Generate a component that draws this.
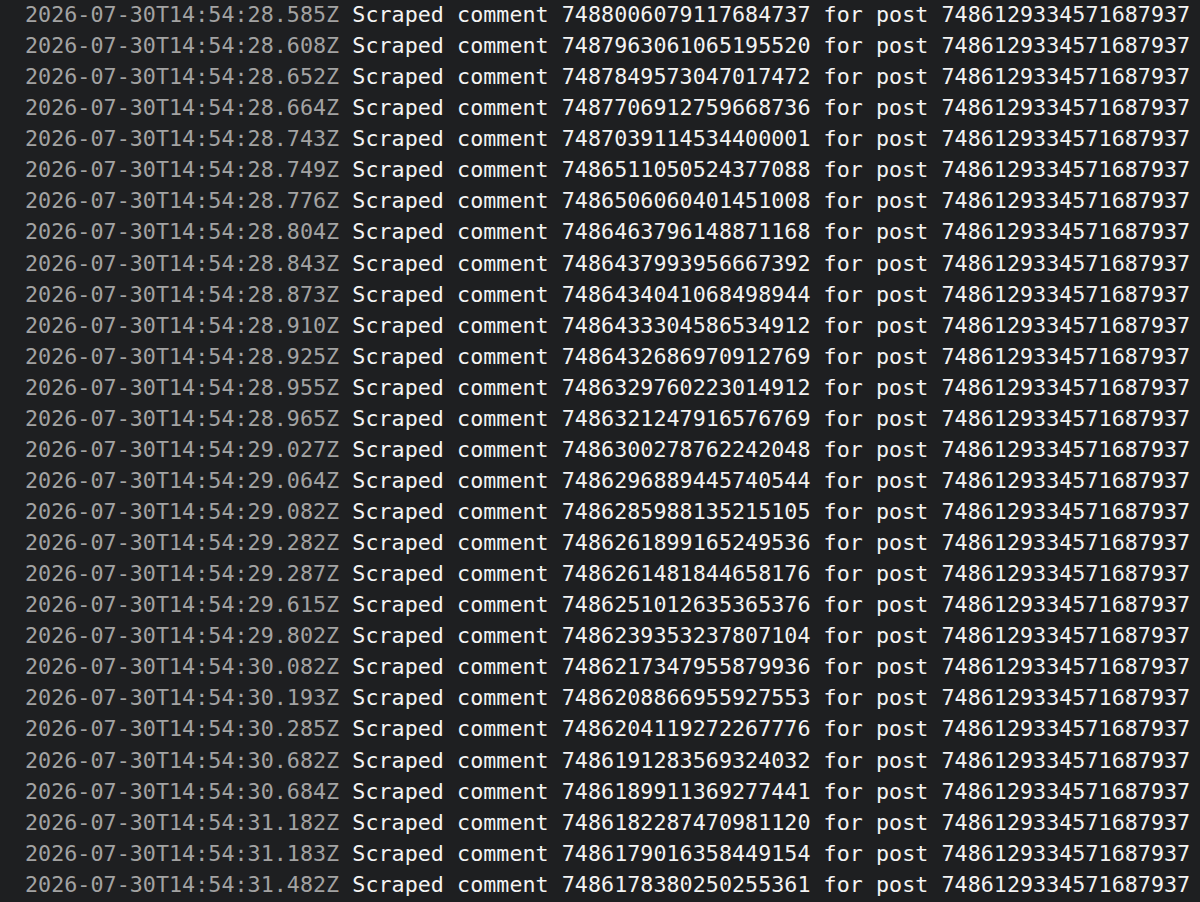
import React from "react";

const POST_ID = "7486129334571687937";

const rows: [string, string][] = [
    ["28.585", "7488006079117684737"],
    ["28.608", "7487963061065195520"],
    ["28.652", "7487849573047017472"],
    ["28.664", "7487706912759668736"],
    ["28.743", "7487039114534400001"],
    ["28.749", "7486511050524377088"],
    ["28.776", "7486506060401451008"],
    ["28.804", "7486463796148871168"],
    ["28.843", "7486437993956667392"],
    ["28.873", "7486434041068498944"],
    ["28.910", "7486433304586534912"],
    ["28.925", "7486432686970912769"],
    ["28.955", "7486329760223014912"],
    ["28.965", "7486321247916576769"],
    ["29.027", "7486300278762242048"],
    ["29.064", "7486296889445740544"],
    ["29.082", "7486285988135215105"],
    ["29.282", "7486261899165249536"],
    ["29.287", "7486261481844658176"],
    ["29.615", "7486251012635365376"],
    ["29.802", "7486239353237807104"],
    ["30.082", "7486217347955879936"],
    ["30.193", "7486208866955927553"],
    ["30.285", "7486204119272267776"],
    ["30.682", "7486191283569324032"],
    ["30.684", "7486189911369277441"],
    ["31.182", "7486182287470981120"],
    ["31.183", "7486179016358449154"],
    ["31.482", "7486178380250255361"],
];

export default function App() {
    return (
        <div className="w-[1200px] h-[902px] overflow-hidden bg-[#1e1f21] pl-[25px]">
            {/* log output */}
            <div className="-mt-px font-['DejaVu_Sans_Mono',monospace] text-[21.7px] tracking-[0.035px] leading-[31.07px] whitespace-pre">
                {rows.map(([sec, id]) => (
                    <div key={id}>
                        <span className="text-[#a3a3a3]">{`2026-07-30T14:54:${sec}Z`}</span>
                        <span className="text-[#f3f3f3]">{` Scraped comment ${id} for post ${POST_ID}`}</span>
                    </div>
                ))}
            </div>
        </div>
    );
}
